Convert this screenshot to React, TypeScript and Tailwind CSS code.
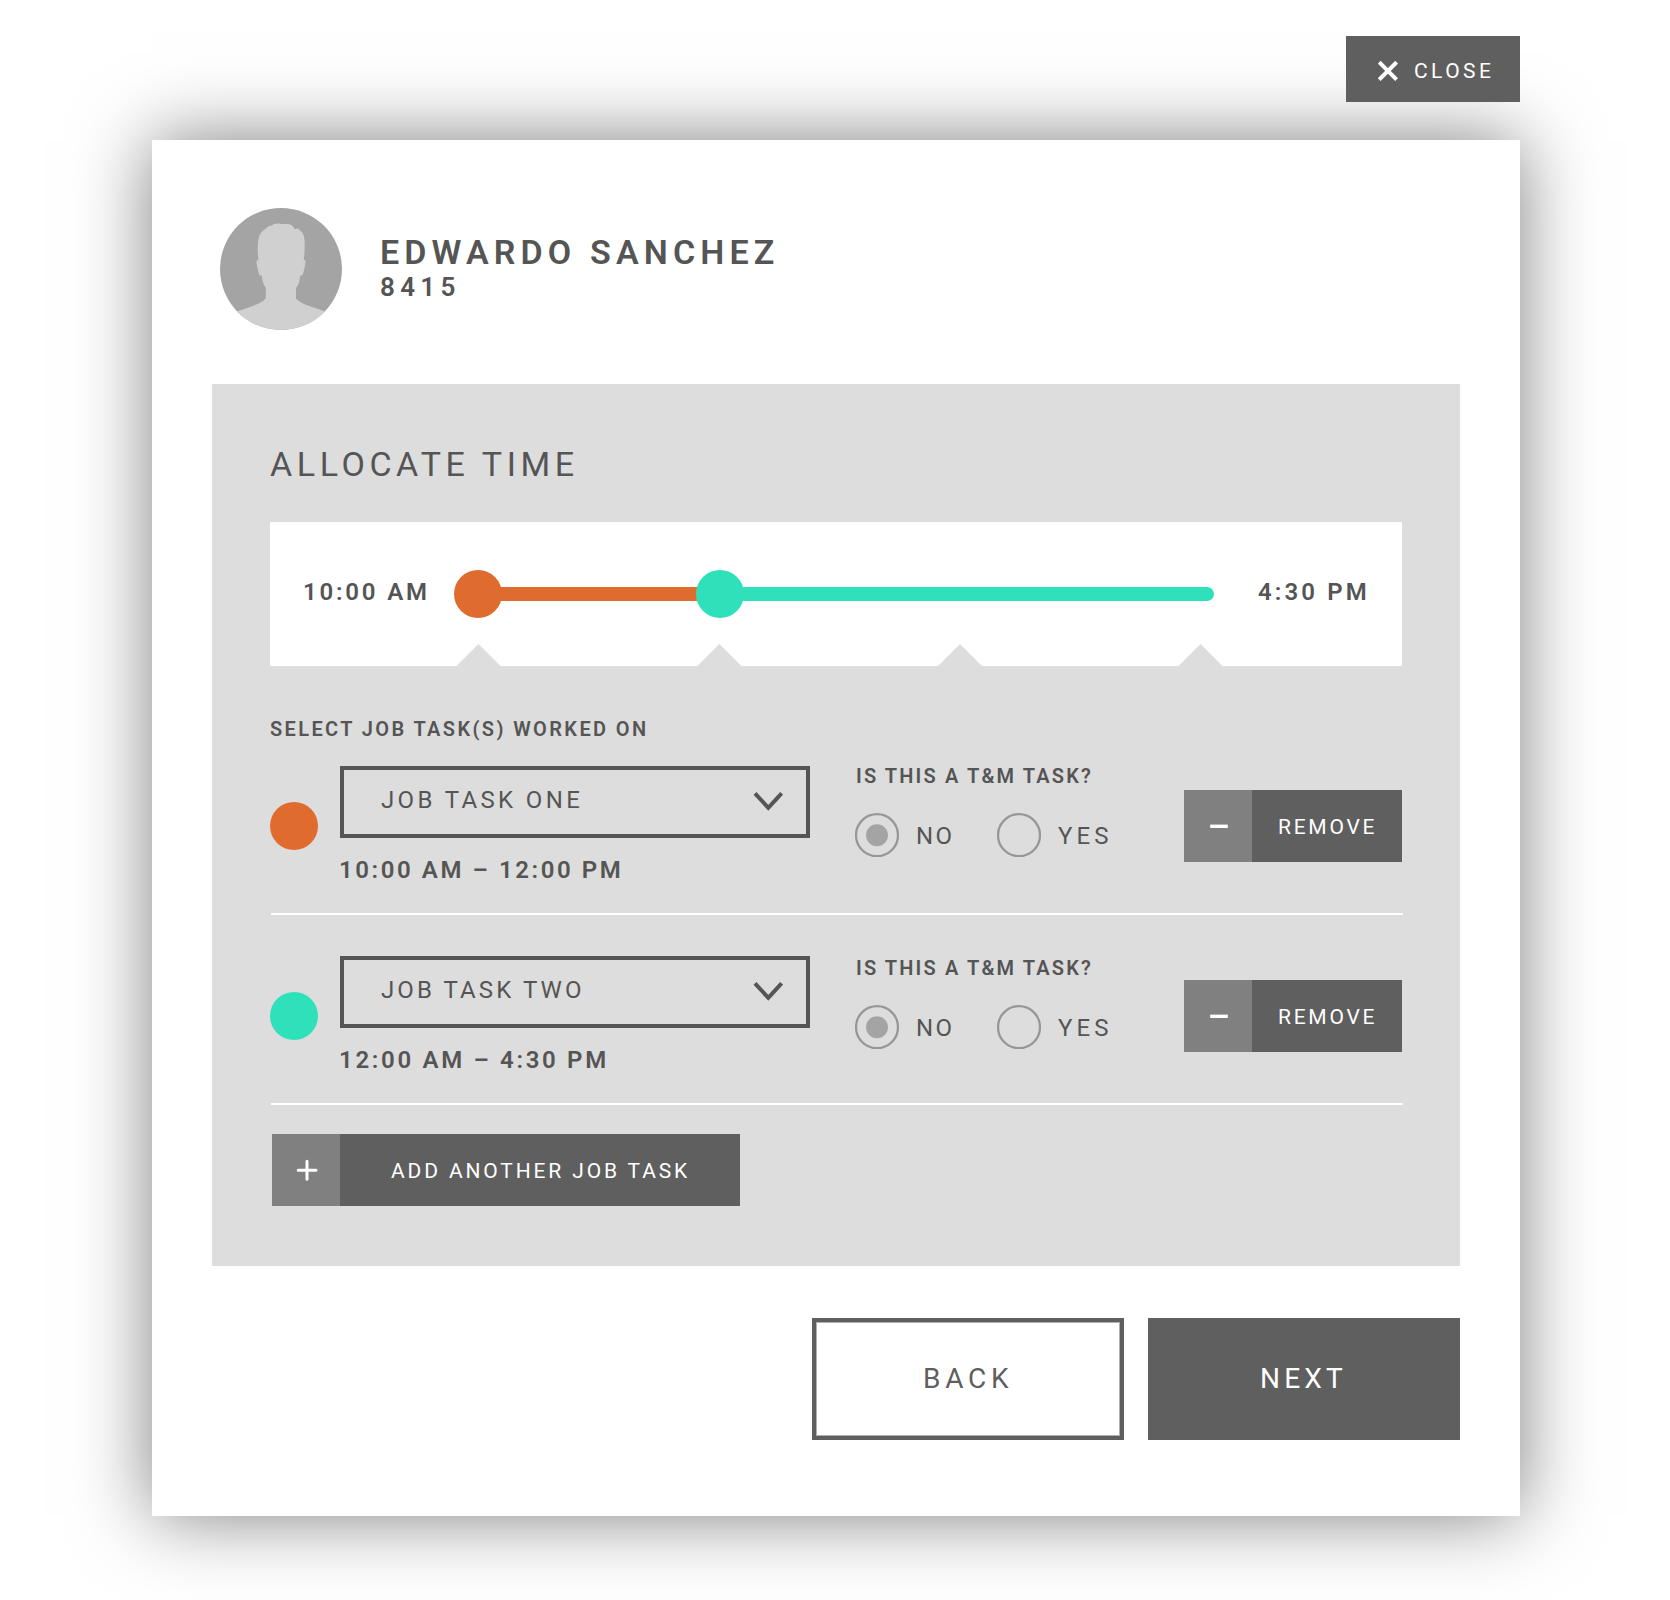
import { ReactNode } from "react";

function CloseIcon() {
  return (
    <svg className="h-5 w-5" viewBox="0 0 20 20" stroke="currentColor" strokeWidth="4" fill="none">
      <path d="M1.2 1.2 18.6 18.6M18.6 1.2 1.2 18.6" />
    </svg>
  );
}

function ChevronIcon() {
  return (
    <svg className="h-5 w-7.5" viewBox="0 0 30 20" stroke="currentColor" strokeWidth="4" fill="none">
      <path d="M2 2.3 15.3 16.8 28.6 2.3" />
    </svg>
  );
}

function MinusIcon() {
  return (
    <svg className="h-6 w-6" viewBox="0 0 24 24" stroke="currentColor" strokeWidth="3.4" fill="none">
      <path d="M4.2 12.3h17.6" />
    </svg>
  );
}

function PlusIcon() {
  return (
    <svg className="h-6 w-6" viewBox="0 0 24 24" stroke="currentColor" strokeWidth="3" fill="none" strokeLinecap="round">
      <path d="M4.2 12.3h17.8M13 3.3v18" />
    </svg>
  );
}

function Avatar() {
  return (
    <svg className="h-[122px] w-[122px]" viewBox="0 0 122 122">
      <defs>
        <clipPath id="avatar-clip">
          <circle cx="61" cy="61" r="61" />
        </clipPath>
      </defs>
      <circle cx="61" cy="61" r="61" fill="#a4a4a4" />
      <path
        clipPath="url(#avatar-clip)"
        fill="#d0d0d0"
        d="M0 122V110L17.5 103.3 33 98C38 96.2 43.5 93.5 45.8 90.3V79.7C43.5 77 42.2 73 41.8 67.5 40.5 67.8 39.6 67.4 39 66 38 62.5 37 58 36.500 54.500 36.500 52.500 37.200 51.800 38.500 52L37.800 45.300C37.600 38 38 30.500 39.800 26.800 41.500 23.500 44.500 21.800 47 19.500 48.500 18.100 50 17.600 52 17.400 54 15.900 57 15 61 16.100 64 15.800 66.500 16 69 16.300 71.500 16.800 73.500 18 74.400 21.200 76 20.300 78.200 20.300 79.500 21L79.300 22.300C83 23.800 84.300 28 84.500 32 85 38 84.600 46 83.700 52 85 51.800 85.700 52.500 85.400 54.500 85 58 84 62.500 83 66 82.400 67.400 81.500 67.800 80.200 67.500 79.800 73 78.500 77 76 79.700V90.300C78.300 93.500 84 96.200 89 98L104.800 103.300 122 110V122Z"
      />
    </svg>
  );
}

function Radio({ checked, label, tracking }: { checked?: boolean; label: string; tracking: string }) {
  return (
    <label className="flex items-start">
      <svg className="mt-px h-11 w-11" viewBox="0 0 44 44">
        <circle cx="22" cy="22.2" r="21" fill="none" stroke="#979797" strokeWidth="2.3" />
        {checked && <circle cx="22" cy="22.2" r="11" fill="#a4a4a4" />}
      </svg>
      <span className={`pt-[12px] text-2xl leading-none ${tracking}`}>{label}</span>
    </label>
  );
}

function ActionButton({ icon, children, className }: { icon: ReactNode; children: ReactNode; className: string }) {
  return (
    <button className={`flex h-18 items-stretch bg-[#5f5f5f] text-left text-[21px] leading-none text-white ${className}`}>
      <span className="flex w-[68px] shrink-0 items-center justify-center bg-[#808080]">{icon}</span>
      {children}
    </button>
  );
}

type Task = { name: string; nameTracking: string; time: string; timeTracking: string; dot: string; question: string };

const tasks: Task[] = [
  {
    name: "JOB TASK ONE",
    nameTracking: "tracking-[3.37px]",
    time: "10:00 AM – 12:00 PM",
    timeTracking: "tracking-[2.58px]",
    dot: "bg-[#df6b2f]",
    question: "mt-0",
  },
  {
    name: "JOB TASK TWO",
    nameTracking: "tracking-[3.1px]",
    time: "12:00 AM – 4:30 PM",
    timeTracking: "tracking-[2.68px]",
    dot: "bg-[#2fe1ba]",
    question: "mt-[2px]",
  },
];

function TaskRow({ task }: { task: Task }) {
  return (
    <div className="flex h-[147px] items-start">
      <span className={`mt-9 h-12 w-12 shrink-0 rounded-full ${task.dot}`} />
      <div className="ml-[22px] w-[470px] shrink-0">
        <div className="flex h-18 justify-between border-4 border-[#555] pr-[23px] pl-[37px]">
          <span className={`mt-[18px] text-2xl leading-none ${task.nameTracking}`}>{task.name}</span>
          <span className="mt-[21px]">
            <ChevronIcon />
          </span>
        </div>
        <p className={`-ml-px mt-5 text-2xl leading-none font-semibold whitespace-nowrap ${task.timeTracking}`}>{task.time}</p>
      </div>
      <div className={`ml-[45px] w-[329px] shrink-0 ${task.question}`}>
        <p className="pl-px text-xl leading-none font-semibold tracking-[2.14px] whitespace-nowrap">IS THIS A T&amp;M TASK?</p>
        <div className="mt-[26px] flex">
          <div className="w-[142px]">
            <Radio checked label="NO" tracking="tracking-[2.5px] pl-[17px]" />
          </div>
          <Radio label="YES" tracking="tracking-[4.1px] pl-[17px]" />
        </div>
      </div>
      <ActionButton icon={<MinusIcon />} className="mt-6 w-[218px] shrink-0">
        <span className="mt-[27px] pl-[26px] tracking-[2.74px]">REMOVE</span>
      </ActionButton>
    </div>
  );
}

function Slider() {
  return (
    <div className="flex h-36 bg-white">
      <span className="mt-[58px] w-[184px] shrink-0 pl-[33px] text-2xl leading-none font-semibold tracking-[2.8px] whitespace-nowrap">
        10:00 AM
      </span>
      <svg className="h-36 w-[790px] shrink-0" viewBox="0 0 790 144">
        <rect x="24" y="65" width="266" height="14" fill="#df6b2f" />
        <rect x="266" y="65" width="494" height="14" rx="7" fill="#2fe1ba" />
        <circle cx="24" cy="72" r="24" fill="#df6b2f" />
        <circle cx="266" cy="72" r="24" fill="#2fe1ba" />
        <g fill="#ddd">
          <path d="M2.5 144 24.5 122 46.5 144Z" />
          <path d="M243.3 144 265.3 122 287.3 144Z" />
          <path d="M484 144 506 122 528 144Z" />
          <path d="M724.5 144 746.5 122 768.5 144Z" />
        </g>
      </svg>
      <span className="mt-[58px] pl-[14px] text-2xl leading-none font-semibold tracking-[3.1px] whitespace-nowrap">4:30 PM</span>
    </div>
  );
}

export default function App() {
  return (
    <div className="min-h-[1600px] w-[1670px] overflow-hidden bg-white px-[150px] pt-9 font-['Roboto',sans-serif] text-[#555]">
      <div className="ml-[2px]">
        <div className="relative z-10 flex justify-end">
          <button className="flex h-[66px] w-[174px] items-start bg-[#5f5f5f] pl-8 text-white">
            <span className="mt-[25px]">
              <CloseIcon />
            </span>
            <span className="mt-[25px] pl-[16px] text-[21px] leading-none tracking-[3.44px]">CLOSE</span>
          </button>
        </div>

        <main className="mt-[38px] h-[1376px] bg-white px-[60px] pt-[68px] shadow-[0_0_72px_rgba(0,0,0,0.5)]">
          <header className="flex pl-2">
            <Avatar />
            <div className="pt-[27px] pl-[38px] font-semibold">
              <h1 className="text-[34px] leading-none tracking-[5.15px]">EDWARDO SANCHEZ</h1>
              <p className="mt-[5px] text-[26px] leading-none tracking-[5.3px]">8415</p>
            </div>
          </header>

          <section className="mt-[54px] h-[882px] bg-[#ddd] px-[58px] pt-[63px]">
            <h2 className="mb-[41px] text-[34px] leading-none tracking-[4.57px]">ALLOCATE TIME</h2>
            <Slider />
            <h3 className="mt-[53px] mb-[27px] text-xl leading-none font-semibold tracking-[2.38px]">SELECT JOB TASK(S) WORKED ON</h3>
            {tasks.map((task) => (
              <div key={task.name} className="mb-[41px]">
                <TaskRow task={task} />
                <div className="-mr-px ml-px h-[2px] bg-white" />
              </div>
            ))}
            <ActionButton icon={<PlusIcon />} className="-mt-3 ml-[2px] w-[468px]">
              <span className="mt-[27px] pl-[51px] tracking-[2.86px] whitespace-nowrap">ADD ANOTHER JOB TASK</span>
            </ActionButton>
          </section>

          <footer className="mt-[52px] flex justify-end gap-6 text-[28px] leading-none">
            <button className="flex h-[122px] w-[312px] items-start border-4 border-[#5f5f5f] pt-[43px] pl-[107px] tracking-[4.74px] text-[#5f5f5f] shadow-[inset_0_0_0_1px_#b0b0b0]">
              BACK
            </button>
            <button className="flex h-[122px] w-[312px] items-start bg-[#5f5f5f] pt-[47px] pl-[112px] tracking-[4.19px] text-white">
              NEXT
            </button>
          </footer>
        </main>
      </div>
    </div>
  );
}
